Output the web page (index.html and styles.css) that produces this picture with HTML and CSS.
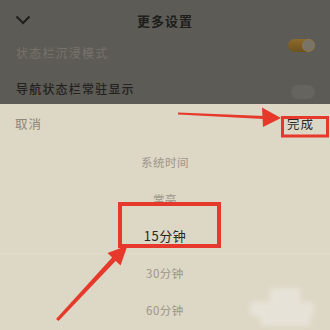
FILE: index.html
```html
<!DOCTYPE html>
<html lang="zh">
<head>
<meta charset="utf-8">
<link rel="stylesheet" href="styles.css">
</head>
<body>
<div class="screen">
  <div class="dim">
    <div class="header">
      <svg class="chev" width="16" height="10" viewBox="0 0 16 10"><path d="M1.5 1.5 L8 8 L14.5 1.5" fill="none" stroke="#1f1e1b" stroke-width="2"/></svg>
      <div class="title">更多设置</div>
    </div>
    <div class="row row1">
      <span class="label faded">状态栏沉浸模式</span>
      <span class="toggle on"><span class="knob"></span></span>
    </div>
    <div class="row row2">
      <span class="label">导航状态栏常驻显示</span>
      <span class="toggle off"></span>
    </div>
  </div>
  <div class="sheet">
    <div class="toolbar">
      <span class="cancel">取消</span>
      <span class="done">完成</span>
    </div>
    <div class="picker">
      <div class="item">系统时间</div>
      <div class="item">常亮</div>
      <div class="item selected">15分钟</div>
      <div class="item">30分钟</div>
      <div class="item">60分钟</div>
    </div>
  </div>
  <div class="watermark"><span class="w1"></span><span class="w2"></span><span class="w3"></span></div>
  <svg class="annot" width="330" height="330" viewBox="0 0 330 330">
    <path d="M178 112.5 L264 116 L264 119 L178 114.5 Z" fill="#e6392b"/>
    <polygon points="281,118 262,107.5 263,127" fill="#e6392b"/>
    <rect x="282.5" y="117.5" width="45" height="18.5" fill="none" stroke="#e6392b" stroke-width="3"/>
    <rect x="120" y="204" width="99" height="42" fill="none" stroke="#e6392b" stroke-width="4"/>
    <path d="M56 319 L113 256.5 L116.5 260 L58.5 321 Z" fill="#e6392b"/>
    <polygon points="127.5,245.5 107.5,253 120.5,265.5" fill="#e6392b"/>
  </svg>
</div>
</body>
</html>
```
FILE: styles.css
```css
* { box-sizing: border-box; }
html, body { margin: 0; padding: 0; }
body {
  width: 330px;
  height: 330px;
  overflow: hidden;
  font-family: "Noto Sans CJK SC", "Noto Sans", sans-serif;
  background: #ddd7c5;
}
.screen {
  position: relative;
  width: 330px;
  height: 330px;
  display: flex;
  flex-direction: column;
}
.dim {
  height: 104px;
  background: #5d5b56;
  display: flex;
  flex-direction: column;
}
.header {
  height: 38px;
  display: flex;
  align-items: center;
  justify-content: center;
  position: relative;
  padding-top: 2px;
}
.chev {
  position: absolute;
  left: 15px;
  top: 15px;
}
.title {
  font-size: 13px;
  font-weight: 700;
  color: #1f1e1b;
  letter-spacing: 1px;
}
.row {
  display: flex;
  justify-content: space-between;
  padding: 0 16px 0 16px;
  position: relative;
}
.row1 {
  height: 36px;
  align-items: flex-start;
}
.row1 .label { margin-top: 6px; }
.row1 .toggle { margin-top: 1px; }
.row2 {
  flex: 1;
  align-items: flex-start;
}
.row2 .label { margin-top: 6px; font-weight: 500; }
.row2 .toggle { margin-top: 11px; }
.label {
  font-size: 12px;
  color: #24221f;
  letter-spacing: 1.2px;
}
.label.faded { color: #77736b; }
.toggle {
  width: 27px;
  height: 13px;
  border-radius: 7px;
  display: block;
  position: relative;
  margin-right: -1px;
}
.toggle.on {
  background: linear-gradient(#8e6a2c, #6d531f);
}
.toggle.on .knob {
  position: absolute;
  right: 0;
  top: 0;
  width: 13px;
  height: 13px;
  border-radius: 50%;
  background: #7a7468;
  border: 1px solid #8d7a52;
}
.toggle.off {
  width: 24px;
  height: 14px;
  background: #66645e;
}
.sheet {
  flex: 1;
  background: #ddd7c5;
  display: flex;
  flex-direction: column;
}
.toolbar {
  height: 39px;
  display: flex;
  justify-content: space-between;
  align-items: center;
  padding: 0 16px 0 15px;
}
.cancel {
  font-size: 12.5px;
  color: #8b867b;
  letter-spacing: 1px;
}
.done {
  font-size: 12.5px;
  color: #2b2a27;
  letter-spacing: 1px;
}
.picker {
  display: flex;
  flex-direction: column;
}
.item {
  height: 37px;
  display: flex;
  align-items: center;
  justify-content: center;
  font-size: 11.5px;
  color: #9c968a;
  letter-spacing: 0.5px;
}
.item.selected {
  font-size: 13px;
  color: #2a2825;
  border-bottom: 1px solid #e0dbcb;
}
.watermark {
  position: absolute;
  left: 250px;
  top: 288px;
  width: 72px;
  height: 40px;
  filter: blur(2.5px);
  opacity: 0.7;
}
.watermark span {
  position: absolute;
  background: #ebe8df;
}
.w1 { left: 20px; top: 0; width: 30px; height: 14px; }
.w2 { left: 0; top: 14px; width: 64px; height: 14px; }
.w3 { left: 10px; top: 28px; width: 50px; height: 10px; }
.annot {
  position: absolute;
  left: 0;
  top: 0;
}
```
